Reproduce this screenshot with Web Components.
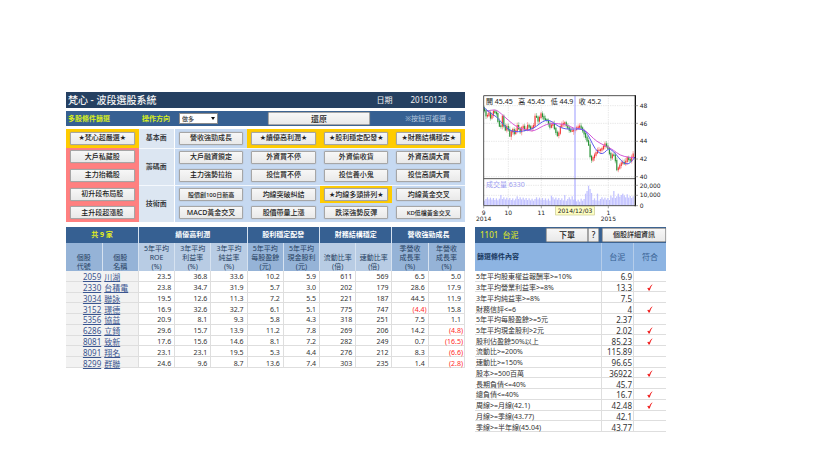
<!DOCTYPE html>
<html lang="zh-Hant">
<head>
<meta charset="utf-8">
<title>梵心 - 波段選股系統</title>
<style>
  body {
    margin: 0;
    background: #fff;
    color: #333;
    font: 7px/10px "Noto Sans", "DejaVu Sans", "Noto Sans CJK TC", sans-serif;
  }
</style>
</head>
<body>
<stock-screener></stock-screener>

<script>
const FILTERS = [
  ["★梵心超嚴選★", "大戶私藏股", "主力抬轎股", "初升段布局股", "主升段超漲股"],
  ["營收強勁成長", "★績優高利潤★", "★股利穩定配發★", "★財務結構穩定★"],
  ["大戶融資鎖定", "外資買不停", "外資偷收貨", "外資高調大買"],
  ["主力強勢拉抬", "投信買不停", "投信養小鬼", "投信高調大買"],
  ["股價創100日新高", "均線突破糾結", "★均線多頭排列★", "均線黃金交叉"],
  ["MACD黃金交叉", "股價帶量上漲", "跌深強勢反彈", "KD低檔黃金交叉"],
];

const STOCKS = [
  ["2059", "川湖", "23.5", "36.8", "33.6", "10.2", "5.9", "611", "569", "6.5", "5.0"],
  ["2330", "台積電", "23.8", "34.7", "31.9", "5.7", "3.0", "202", "179", "28.6", "17.9"],
  ["3034", "聯詠", "19.5", "12.6", "11.3", "7.2", "5.5", "221", "187", "44.5", "11.9"],
  ["3152", "璟德", "16.9", "32.6", "32.7", "6.1", "5.1", "775", "747", "(4.4)", "15.8"],
  ["5356", "協益", "20.9", "8.1", "9.3", "5.8", "4.3", "318", "251", "7.5", "1.1"],
  ["6286", "立錡", "29.6", "15.7", "13.9", "11.2", "7.8", "269", "206", "14.2", "(4.8)"],
  ["8081", "致新", "17.6", "15.6", "14.6", "8.1", "7.2", "282", "249", "0.7", "(16.5)"],
  ["8091", "翔名", "23.1", "23.1", "19.5", "5.3", "4.4", "276", "212", "8.3", "(6.6)"],
  ["8299", "群聯", "24.6", "9.6", "8.7", "13.6", "7.4", "303", "235", "1.4", "(2.8)"],
];

const CONDITIONS = [
  ["5年平均股東權益報酬率>=10%", "6.9", false],
  ["3年平均營業利益率>=8%", "13.3", true],
  ["3年平均純益率>=8%", "7.5", false],
  ["財務信評<=6", "4", true],
  ["5年平均每股盈餘>=5元", "2.37", false],
  ["5年平均現金股利>2元", "2.02", true],
  ["股利佔盈餘50%以上", "85.23", true],
  ["流動比>=200%", "115.89", false],
  ["速動比>=150%", "96.65", false],
  ["股本>=500百萬", "36922", true],
  ["長期負債<=40%", "45.7", false],
  ["總負債<=40%", "16.7", true],
  ["周線>=月線(42.1)", "42.48", true],
  ["月線>=季線(43.77)", "42.1", false],
  ["季線>=半年線(45.04)", "43.77", false],
];

function escapeText(text) {
  return text.replace(/</g, "&lt;").replace(/>/g, "&gt;");
}

function define(name, render) {
  customElements.define(name, class extends HTMLElement {
    constructor() {
      super();
      this.attachShadow({ mode: "open" });
    }
    connectedCallback() {
      const template = document.createElement("template");
      template.innerHTML = render(this);
      this.shadowRoot.replaceChildren(template.content.cloneNode(true));
    }
  });
}

define("push-button", () => `
  <style>
    :host { display: block; min-width: 0; }
    button {
      display: block;
      width: 100%;
      height: 100%;
      min-height: 13px;
      box-sizing: border-box;
      margin: 0;
      padding: 0;
      border: 1px solid #a6a6a6;
      border-radius: 1px;
      background: linear-gradient(#f7f7f7, #e9e9e9);
      box-shadow: 0 0 1px #8c8c8c;
      color: #222;
      font: inherit;
      font-weight: 500;
      line-height: 10px;
      white-space: nowrap;
    }
  </style>
  <button type="button"><slot></slot></button>`);

define("check-mark", () => `
  <style>
    :host { display: block; }
    svg { display: block; width: 6px; height: 7px; margin: 0 auto; }
  </style>
  <svg viewBox="0 0 12 14" role="img">
    <path d="M0.5 8.4C1.6 6.8 3.2 7 4.2 9.2C5.8 5.6 8 2.6 11.3 0.6C8.8 4 6.8 8.2 5.4 13H3C2.5 10.6 1.8 9.4 0.5 8.4Z" fill="#f01818"/>
  </svg>`);

define("screen-title", () => `
  <style>
    :host {
      display: flex;
      align-items: center;
      gap: 18px;
      height: 16px;
      padding: 0 18px 0 2px;
      background: #254061;
      color: #f2f2f2;
      font-size: 8px;
    }
    h1 { flex: 1; margin: 0; font-size: 10px; font-weight: 500; }
  </style>
  <h1><slot></slot></h1>
  <span>日期</span>
  <slot name="date"></slot>`);

define("filter-bar", () => `
  <style>
    :host {
      display: grid;
      grid-template-columns: 76fr 37fr 39fr 50fr 102fr 95fr;
      align-items: center;
      height: 15px;
      background: #366092;
      color: #d7ee1c;
      font-weight: 700;
    }
    .name { padding-left: 2px; }
    .choice { display: grid; align-items: center; }
    .choice > * { grid-area: 1 / 1; }
    select {
      appearance: none;
      width: 100%;
      height: 11px;
      margin: 0;
      padding: 0 2px;
      border: 1px solid #8c8c8c;
      border-radius: 0;
      background: #fff;
      color: #222;
      font: inherit;
      font-size: 6px;
      font-weight: 400;
      line-height: 8px;
    }
    .choice::after {
      content: "";
      grid-area: 1 / 1;
      justify-self: end;
      margin-right: 3px;
      border: 2px solid transparent;
      border-top: 3px solid #111;
      border-bottom: 0;
      pointer-events: none;
    }
    push-button { grid-column: 5; font-size: 8px; }
    .note { padding-right: 12px; color: #b5c7de; font-weight: 400; text-align: right; white-space: nowrap; }
  </style>
  <span class="name">多股條件篩選</span>
  <label for="side">操作方向</label>
  <span class="choice"><select id="side"><option>做多</option><option>做空</option></select></span>
  <push-button>還原</push-button>
  <span class="note">※按鈕可複選。</span>`);

define("filter-cell", () => `
  <style>
    :host { display: grid; align-items: center; padding: 0 4px; background: #c6d9f1; }
    :host([tone="pink"]) { background: #ff8080; }
    :host([on]) { background: #ffcc00; }
    :host([small]) { font-size: 6px; }
  </style>
  <push-button><slot></slot></push-button>`);

define("filter-grid", () => {
  const groups = { 1: ["基本面", 1], 2: ["籌碼面", 2], 4: ["技術面", 2] };
  let cells = "";
  for (let row = 1; row <= 5; row++) {
    const preset = FILTERS[0][row - 1];
    const line = groups[row] && row > 1 ? " line" : "";
    cells += `<filter-cell tone="pink" ${preset[0] === "★" ? "on" : ""}>${preset}</filter-cell>`;
    if (groups[row]) {
      const [name, span] = groups[row];
      cells += `<span class="group${line}" style="grid-row: span ${span}">${name}</span>`;
    }
    for (const label of FILTERS[row]) {
      const on = label[0] === "★" ? "on" : "";
      const small = /100|KD/.test(label) ? "small" : "";
      cells += `<filter-cell class="${line}" ${on} ${small}>${label}</filter-cell>`;
    }
  }
  return `
  <style>
    :host {
      display: grid;
      grid-template-columns: 2fr 1fr repeat(4, 2fr);
      grid-auto-rows: 1fr;
      min-height: 93px;
    }
    .group {
      display: flex;
      align-items: center;
      justify-content: center;
      background: #dce6f2;
      border-right: 1px solid #fff;
      color: #222;
      font-weight: 500;
    }
    .line { border-top: 1px solid #f4f8fd; }
  </style>
  ${cells}`;
});

define("result-table", () => {
  const rows = STOCKS.map(([code, name, ...values]) => `
    <tr>
      <td class="code"><a href="#${code}">${code}</a></td>
      <td class="stock"><a href="#${code}">${name}</a></td>
      ${values.map(v => `<td${v[0] === "(" ? ' class="minus"' : ""}>${v}</td>`).join("")}
    </tr>`).join("");
  return `
  <style>
    :host { display: block; }
    table { width: 100%; height: 141px; border-collapse: collapse; table-layout: fixed; }
    th, td { padding: 0; white-space: nowrap; }
    th { font-weight: 400; color: #254061; border-left: 1px solid #d6e2f0; }
    th:first-child { border-left: 0; }
    .top th { height: 16px; background: #366092; color: #fff; font-weight: 700; }
    .top .count { color: #e4f01c; }
    .sub th { height: 28px; line-height: 9px; vertical-align: bottom; background: #b8cce4; }
    .sub .deep { background: #95b3d7; }
    td {
      border: 1px solid #dedede;
      border-top: 0;
      padding: 2px 3px 0 0;
      line-height: 7px;
      text-align: right;
    }
    .code, .stock { background: #f2f2f2; border-right: 0; font-size: 8px; }
    .code { padding-right: 1px; border-left: 0; }
    .stock { padding: 2px 0 0 2px; border-left: 0; text-align: left; }
    .minus { padding-right: 1px; color: #ff2a2a; }
    a { color: #3a5590; }
  </style>
  <table>
    <thead>
      <tr class="top">
        <th colspan="2" class="count">共 9 家</th>
        <th colspan="3">績優高利潤</th>
        <th colspan="2">股利穩定配發</th>
        <th colspan="2">財務結構穩定</th>
        <th colspan="2">營收強勁成長</th>
      </tr>
      <tr class="sub">
        <th class="deep">個股<br>代號</th>
        <th class="deep">個股<br>名稱</th>
        <th>5年平均<br>ROE<br>(%)</th>
        <th>3年平均<br>利益率<br>(%)</th>
        <th>3年平均<br>純益率<br>(%)</th>
        <th class="deep">5年平均<br>每股盈餘<br>(元)</th>
        <th class="deep">5年平均<br>現金股利<br>(元)</th>
        <th>流動比率<br>(倍)</th>
        <th>速動比率<br>(倍)</th>
        <th class="deep">季營收<br>成長率<br>(%)</th>
        <th class="deep">年營收<br>成長率<br>(%)</th>
      </tr>
    </thead>
    <tbody>${rows}</tbody>
  </table>`;
});

// key points of the closing price, drawn in chart units
const CLOSES = [[43, 66], [50, 90], [56, 72], [62, 92], [70, 70], [79, 76], [86, 112], [92, 118], [97, 85], [104, 130],
  [112, 112], [119, 145], [127, 122], [134, 140], [143, 108], [149, 135], [158, 112], [166, 130], [173, 112],
  [182, 122], [192, 112], [196, 78], [204, 99], [213, 78], [222, 93], [232, 98], [240, 118], [248, 106], [256, 130],
  [264, 146], [272, 112], [284, 104], [292, 118], [300, 130], [310, 128], [320, 120], [330, 114], [340, 132],
  [350, 155], [356, 172], [362, 220], [372, 204], [382, 188], [394, 185], [405, 168], [414, 182], [422, 210],
  [430, 196], [436, 218], [441, 248], [448, 234], [456, 222], [464, 228], [472, 208], [480, 220], [487, 203], [494, 190]];

function closeAt(x) {
  const i = Math.max(1, CLOSES.findIndex(p => p[0] >= x));
  const [x0, y0] = CLOSES[i - 1];
  const [x1, y1] = CLOSES[i];
  return y0 + (y1 - y0) * (x - x0) / (x1 - x0);
}

function curve(points) {
  let d = `M${points[0]}`;
  for (let i = 1; i < points.length - 1; i++) {
    const [x, y] = points[i];
    const [nx, ny] = points[i + 1];
    d += ` Q${x} ${y} ${(x + nx) / 2} ${(y + ny) / 2}`;
  }
  return d + ` L${points[points.length - 1]}`;
}

define("price-chart", () => {
  const peaks = { 11: 32, 22: 28, 45: 30, 54: 32, 59: 28, 68: 36, 69: 44, 70: 60, 71: 50, 72: 38, 76: 36, 87: 44, 90: 36, 93: 36, 96: 34 };
  let candles = "";
  let bars = "";
  let previous = 60;
  for (let i = 0; i < 101; i++) {
    const x = 43.5 + i * 4.46;
    const close = closeAt(x);
    const open = previous;
    const top = Math.min(open, close) - 2;
    const tall = Math.max(5, Math.abs(open - close) + 4);
    const color = close > open ? "#1e8e2e" : "#f23030";
    candles += `<path d="M${x.toFixed(1)} ${(top - 3 - i * 7 % 6).toFixed(1)}v${(tall + 7 + i * 5 % 7).toFixed(1)}" stroke="${color}" stroke-width="1.2"/>
      <rect x="${(x - 1.5).toFixed(1)}" y="${top.toFixed(1)}" width="3" height="${tall.toFixed(1)}" fill="${color}"/>`;
    const volume = peaks[i] || 15 + i * 5 % 11 + (i > 84 ? 8 : 0) - (i > 60 && i < 65 ? 4 : 0);
    bars += `<rect x="${(x - 1.9).toFixed(1)}" y="${353 - volume}" width="3.8" height="${volume}"/>`;
    previous = close;
  }
  const blue = [[41, 58], [62, 76], [80, 86], [100, 110], [120, 129], [145, 132], [170, 127], [190, 122], [210, 106],
    [225, 97], [240, 97], [255, 108], [275, 121], [300, 124], [330, 122], [346, 127], [360, 152], [375, 183],
    [392, 199], [404, 194], [415, 181], [430, 189], [445, 208], [460, 225], [475, 229], [486, 219], [495, 207]];
  const pink = [[50, 70], [75, 62], [95, 78], [115, 97], [140, 117], [160, 124], [185, 130], [200, 125], [220, 113],
    [240, 106], [265, 107], [290, 110], [310, 121], [335, 123], [350, 130], [370, 152], [390, 166], [410, 175],
    [430, 186], [450, 202], [475, 208], [495, 209]];
  return `
  <style>
    :host { display: block; }
    svg { display: block; width: 100%; }
    text { font-size: 18px; font-family: "DejaVu Sans", sans-serif; fill: #222; }
    .quote text, .volume { font-size: 21px; font-family: "Noto Sans", "Noto Sans CJK TC", sans-serif; }
    .volume { fill: #9c9cf0; }
    .middle text { text-anchor: middle; }
  </style>
  <svg viewBox="15 12 573 396">
    <g stroke="#dcdcdc" stroke-width="2" stroke-dasharray="4 3">
      <path d="M42 53H496M42 106H496M42 160H496M42 213H496M42 266H496M42 292H496M42 322H496"/>
      <path d="M115 23V353M214 23V353M415 23V353"/>
    </g>
    <g fill="#c3c3ff">${bars}</g>
    ${candles}
    <path d="${curve(pink)}" fill="none" stroke="#d45ad8" stroke-width="3"/>
    <path d="${curve(blue)}" fill="none" stroke="#5a5af0" stroke-width="3"/>
    <path d="M315 23V353" stroke="#b4b4ff" stroke-width="5" opacity=".8"/>
    <path d="M41 353V23H496M41 272H496M41 353H496" fill="none" stroke="#555" stroke-width="3"/>
    <path d="M496 22V355" stroke="#111" stroke-width="4"/>
    <path d="M496 53h8M496 106h8M496 160h8M496 213h8M496 266h8M496 292h8M496 322h8M496 353h8M41 353v8M115 353v8M214 353v8M415 353v8" stroke="#777" stroke-width="2"/>
    <g class="quote">
      <text x="48" y="47">開 45.45</text>
      <text x="145" y="47">高 45.45</text>
      <text x="242" y="47">低 44.9</text>
      <text x="326" y="47">收 45.2</text>
    </g>
    <text class="volume" x="48" y="296">成交量 6330</text>
    <text x="509" y="60">48</text>
    <text x="509" y="113">46</text>
    <text x="509" y="166">44</text>
    <text x="509" y="219">42</text>
    <text x="509" y="272">40</text>
    <text x="509" y="299">20,000</text>
    <text x="509" y="328">10,000</text>
    <text x="509" y="359">0</text>
    <g class="middle">
      <text x="41" y="380">9</text>
      <text x="41" y="400">2014</text>
      <text x="115" y="380">10</text>
      <text x="214" y="380">11</text>
      <text x="415" y="380">1</text>
      <text x="415" y="400">2015</text>
      <rect x="257" y="355" width="116" height="26" fill="#ffffc4" stroke="#c8c88c" stroke-width="2"/>
      <text x="315" y="374">2014/12/03</text>
    </g>
  </svg>`;
});

define("detail-bar", () => `
  <style>
    :host {
      display: grid;
      grid-template-columns: 71fr 42fr 11fr 3fr 64fr;
      align-items: center;
      height: 16px;
      background: #366092;
      color: #e4f01c;
      font-size: 8px;
    }
    .stock { padding-left: 5px; }
    .info { grid-column: 5; font-size: 7px; }
    push-button { height: 14px; }
  </style>
  <span class="stock"><slot></slot></span>
  <push-button>下單</push-button>
  <push-button>?</push-button>
  <push-button class="info">個股詳細資訊</push-button>`);

define("detail-table", () => {
  const rows = CONDITIONS.map(([name, value, ok]) => `
    <tr>
      <td>${escapeText(name)}</td>
      <td class="value">${value}</td>
      <td>${ok ? "<check-mark></check-mark>" : ""}</td>
    </tr>`).join("");
  return `
  <style>
    :host { display: block; }
    table { width: 100%; height: 189px; border-collapse: collapse; table-layout: fixed; }
    col.wide { width: 66%; }
    th, td { padding: 0; white-space: nowrap; }
    th { height: 28px; background: #8db4e2; color: #366092; font-size: 8px; font-weight: 400; border-left: 1px solid #b5cdea; }
    th:first-child { padding-left: 2px; border-left: 0; color: #17375e; font-size: 7px; font-weight: 700; text-align: left; }
    td { padding-top: 2px; border: 1px solid #dedede; border-width: 0 0 1px; line-height: 7px; }
    td:first-child { padding-left: 1px; }
    .value { border-width: 0 1px 1px; padding-right: 1px; font-size: 8px; text-align: right; }
  </style>
  <table>
    <colgroup><col class="wide"><col><col></colgroup>
    <thead><tr><th>篩選條件內容</th><th>台泥</th><th>符合</th></tr></thead>
    <tbody>${rows}</tbody>
  </table>`;
});

define("stock-screener", () => `
  <style>
    :host {
      display: grid;
      grid-template-columns: minmax(0, 399fr) minmax(0, 191fr);
      gap: 10px;
      align-items: start;
      padding: 92px 154px 20px 66px;
    }
    section { display: grid; }
    .screen { row-gap: 3px; }
    .screen result-table { margin-top: 2px; }
    .stock price-chart { margin-bottom: 3px; }
  </style>
  <section class="screen">
    <screen-title>梵心 - 波段選股系統<span slot="date">20150128</span></screen-title>
    <filter-bar></filter-bar>
    <filter-grid></filter-grid>
    <result-table></result-table>
  </section>
  <section class="stock">
    <price-chart></price-chart>
    <detail-bar>1101 &nbsp;台泥</detail-bar>
    <detail-table></detail-table>
  </section>`);
</script>
</body>
</html>
